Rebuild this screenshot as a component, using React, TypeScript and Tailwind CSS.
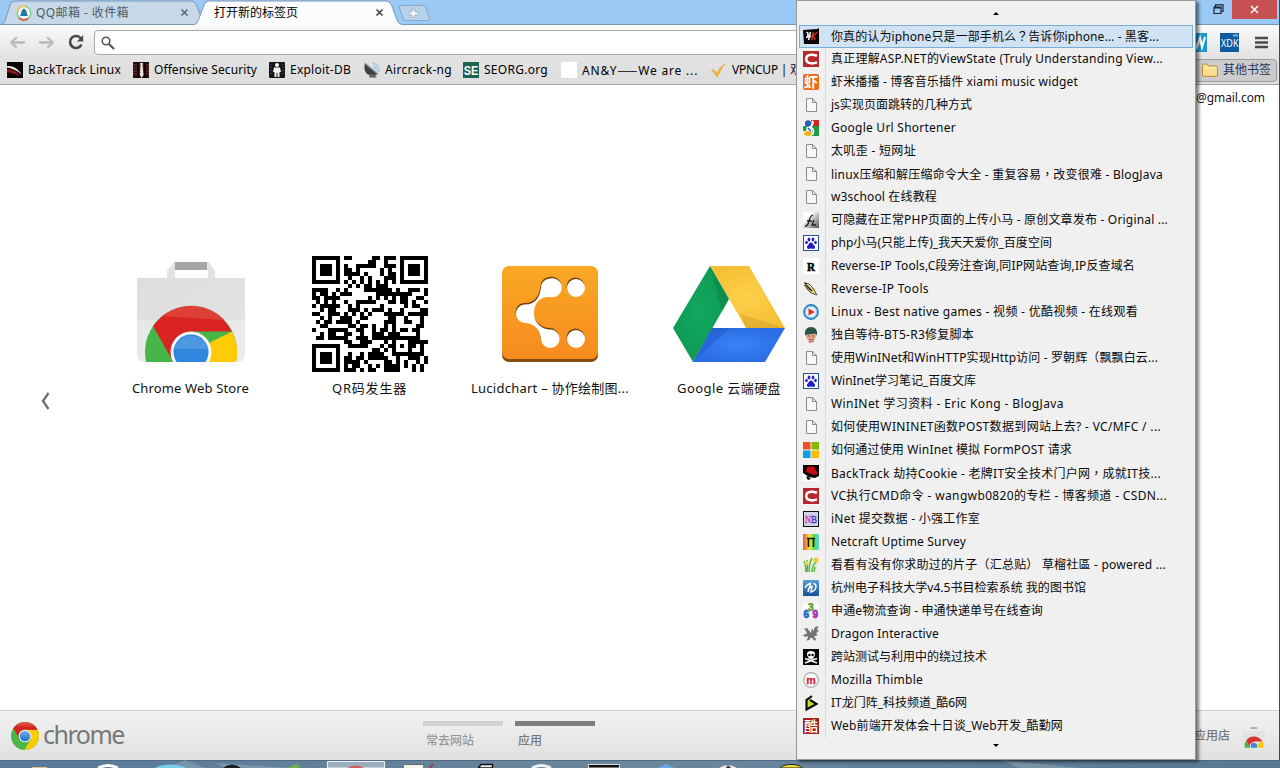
import { useLayoutEffect, useRef, useState } from "react";
import type { ReactNode } from "react";

/* Text run whose tracking is adjusted so that it fills a given width. */
function Fit({ w, className = "", children }: { w: number; className?: string; children: string }) {
  const ref = useRef<HTMLSpanElement>(null);
  const [ls, setLs] = useState(0);
  useLayoutEffect(() => {
    if (ref.current) {
      const natural = ref.current.getBoundingClientRect().width - ls * children.length;
      setLs((w - natural) / children.length);
    }
  }, [w, children]);
  return (
    <span ref={ref} className={"inline-block shrink-0 whitespace-pre " + className} style={{ letterSpacing: `${ls}px` }}>
      {children.split(/([？，]|——)/).map((part, i) =>
        i % 2 ? (
          <span key={i} className="font-['Noto_Sans_CJK_TC',sans-serif]">
            {part}
          </span>
        ) : (
          part
        ),
      )}
    </span>
  );
}

/* ---------- QR code, version 3, level L, mask 3 ---------- */
function makeQr(text: string): boolean[][] {
  const N = 29;
  const bits: number[] = [];
  const put = (v: number, n: number) => {
    for (let i = n - 1; i >= 0; i--) bits.push((v >> i) & 1);
  };
  put(4, 4);
  put(text.length, 8);
  for (const c of text) put(c.charCodeAt(0), 8);
  put(0, 4);
  while (bits.length % 8) bits.push(0);
  const data: number[] = [];
  for (let i = 0; i < bits.length; i += 8) data.push(parseInt(bits.slice(i, i + 8).join(""), 2));
  for (let p = 0; data.length < 55; p++) data.push(p % 2 ? 0x11 : 0xec);
  const mul = (a: number, b: number) => {
    let r = 0;
    for (; b; b >>= 1) {
      if (b & 1) r ^= a;
      a = a << 1;
      if (a & 256) a ^= 0x11d;
    }
    return r;
  };
  let gen = [1];
  let root = 1;
  for (let i = 0; i < 15; i++) {
    const next = [...gen, 0];
    gen.forEach((g, k) => (next[k + 1] ^= mul(g, root)));
    gen = next;
    root = mul(root, 2);
  }
  const rem = [...data, ...new Array(15).fill(0)];
  for (let i = 0; i < 55; i++) {
    const f = rem[i];
    gen.forEach((g, k) => (rem[i + k] ^= mul(g, f)));
  }
  const stream = [...data, ...rem.slice(55)];
  const m: (boolean | null)[][] = Array.from({ length: N }, () => new Array(N).fill(null));
  const finder = (r0: number, c0: number) => {
    for (let r = -1; r < 8; r++)
      for (let c = -1; c < 8; c++) {
        if (r0 + r < 0 || c0 + c < 0 || r0 + r >= N || c0 + c >= N) continue;
        const d = Math.max(Math.abs(r - 3), Math.abs(c - 3));
        m[r0 + r][c0 + c] = d !== 2 && d !== 4;
      }
  };
  finder(0, 0);
  finder(0, N - 7);
  finder(N - 7, 0);
  for (let r = -2; r <= 2; r++) for (let c = -2; c <= 2; c++) m[22 + r][22 + c] = Math.max(Math.abs(r), Math.abs(c)) !== 1;
  for (let i = 8; i < N - 8; i++) m[6][i] = m[i][6] = i % 2 === 0;
  const fmt = [..."111100010011101"].map((b) => b === "1");
  const cols = [0, 1, 2, 3, 4, 5, 7, 8];
  for (let i = 0; i < 8; i++) m[8][cols[i]] = fmt[i];
  const rows = [7, 5, 4, 3, 2, 1, 0];
  for (let i = 0; i < 7; i++) m[rows[i]][8] = fmt[8 + i];
  for (let i = 0; i < 7; i++) m[N - 1 - i][8] = fmt[i];
  for (let i = 0; i < 8; i++) m[8][N - 8 + i] = fmt[7 + i];
  m[N - 8][8] = true;
  let k = 0;
  let up = true;
  for (let c = N - 1; c > 0; c -= 2) {
    if (c === 6) c--;
    for (let i = 0; i < N; i++) {
      const r = up ? N - 1 - i : i;
      for (const cc of [c, c - 1]) {
        if (m[r][cc] !== null) continue;
        const bit = k < stream.length * 8 ? (stream[k >> 3] >> (7 - (k & 7))) & 1 : 0;
        k++;
        m[r][cc] = (bit === 1) !== ((r + cc) % 3 === 0);
      }
    }
    up = !up;
  }
  return m as boolean[][];
}

function QrIcon() {
  const d = makeQr("http://www.the-qrcode-generator.com")
    .flatMap((row, r) => row.map((on, c) => (on ? `M${c} ${r}h1v1h-1z` : "")))
    .join("");
  return (
    <svg width="116" height="116" viewBox="0 0 29 29" shapeRendering="crispEdges">
      <path d={d} />
    </svg>
  );
}

/* ---------- larger drawings ---------- */
function ChromeBall({ id }: { id: string }) {
  return (
    <g>
      <defs>
        <linearGradient id={id + "r"} x1="0" y1="0" x2="0" y2="1">
          <stop offset="0" stopColor="#e0604f" />
          <stop offset=".35" stopColor="#d8201d" />
        </linearGradient>
        <linearGradient id={id + "b"} x1="0" y1="0" x2="0" y2="1">
          <stop offset="0" stopColor="#7fb1ea" />
          <stop offset="1" stopColor="#1a6fd0" />
        </linearGradient>
      </defs>
      <circle cx="50" cy="50" r="50" fill="#4cb748" />
      <path d="M50 50L71 61L48 100A50 50 0 0 0 95 28L50 28z" fill="#fdcb06" />
      <path d="M8.500 22A50 50 0 0 1 95 28L50 28A22 22 0 0 0 30 60z" fill={`url(#${id}r)`} />
      <circle cx="50" cy="50" r="22.500" fill="#f4f4f2" />
      <circle cx="50" cy="50" r="19" fill={`url(#${id}b)`} />
    </g>
  );
}

function StoreIcon() {
  return (
    <svg width="108" height="101" viewBox="0 0 108 101">
      <defs>
        <linearGradient id="bag" x1="0" y1="0" x2="1" y2="1">
          <stop offset="0" stopColor="#dcdedf" />
          <stop offset="1" stopColor="#e4e4e4" />
        </linearGradient>
        <clipPath id="bagclip">
          <path d="M0 17H108V93Q108 101 100 101H8Q0 101 0 93z" />
        </clipPath>
      </defs>
      <path d="M30 17V10L37 1H72L78 10V17H71V9H38V17z" fill="#e1e2e3" />
      <rect x="38" y="1" width="32" height="8" fill="#a5a5a5" />
      <path d="M0 17H108V93Q108 101 100 101H8Q0 101 0 93z" fill="url(#bag)" />
      <path d="M0 59H108V93Q108 101 100 101H8Q0 101 0 93z" fill="#fff" opacity=".25" />
      <g clipPath="url(#bagclip)">
        <circle cx="54" cy="91" r="46" fill="#48b548" />
        <path d="M54 91L95 70.500A46 46 0 0 1 90 120L50 125z" fill="#fecb05" />
        <path d="M16 65A46 46 0 0 1 95 70.500H54L34 97z" fill="#da2422" />
        <path d="M25 55A46 46 0 0 1 88 59z" fill="#e2554b" opacity=".55" />
        <circle cx="54" cy="91" r="20.500" fill="#f8f8f8" />
        <circle cx="54" cy="91" r="17.500" fill="#2f86dd" />
        <path d="M37 88A17.500 17.500 0 0 1 71 88z" fill="#62a5e8" opacity=".6" />
      </g>
    </svg>
  );
}

function LucidIcon() {
  const shape = (
    <>
      <circle cx="74" cy="22" r="9" />
      <circle cx="74" cy="73" r="9" />
      <path d="M48 12.500A9.500 9.500 0 1 1 48 31C40 30 32 35 32 47S41 63 48 63.500A9.300 9.300 0 1 1 39 74C38.500 64 33 57.500 23 57A9.300 9.300 0 0 1 22 38.500C33 39 38 32 39 21A9.500 9.500 0 0 1 48 12.500z" />
    </>
  );
  return (
    <svg width="96" height="97" viewBox="0 0 96 97">
      <defs>
        <linearGradient id="luc" x1="0" y1="0" x2="0" y2="1">
          <stop offset="0" stopColor="#f9a825" />
          <stop offset="1" stopColor="#f78b1e" />
        </linearGradient>
      </defs>
      <rect y="3" width="96" height="93" rx="7" fill="#874a0f" />
      <rect width="96" height="93" rx="7" fill="url(#luc)" />
      <g fill="#74400d" transform="translate(-.5 -1.500)">{shape}</g>
      <g fill="#fff">{shape}</g>
    </svg>
  );
}

function DriveIcon() {
  return (
    <svg width="112" height="97" viewBox="0 0 112 97">
      <defs>
        <radialGradient id="dy">
          <stop offset="0" stopColor="#ffd04b" />
          <stop offset="1" stopColor="#f4c136" />
        </radialGradient>
        <radialGradient id="dg">
          <stop offset="0" stopColor="#11a860" />
          <stop offset="1" stopColor="#0e9a55" />
        </radialGradient>
        <radialGradient id="db">
          <stop offset="0" stopColor="#3d82fb" />
          <stop offset="1" stopColor="#2a6de4" />
        </radialGradient>
      </defs>
      <path d="M37 0H76L112 62H73z" fill="url(#dy)" />
      <path d="M37 0L56 33L20 96L0 62z" fill="url(#dg)" />
      <path d="M39 62H112L92 96H20z" fill="url(#db)" />
      <path d="M37 0L56 33L49 46z" fill="#06723e" opacity=".3" />
      <path d="M67 48L112 62H73z" fill="#b98a1d" opacity=".3" />
      <path d="M39 62H57L20 96z" fill="#1a4fb5" opacity=".35" />
    </svg>
  );
}

/* ---------- favicons ---------- */
function Ico({ children }: { children?: ReactNode }) {
  return (
    <svg width="16" height="16" viewBox="0 0 16 16" className="shrink-0">
      {children}
    </svg>
  );
}

const cjk = "'Noto Sans CJK SC', sans-serif";
const serif = "'Liberation Serif', serif";
const sans = "'Liberation Sans', sans-serif";

const icons: Record<string, ReactNode> = {
  page: <path d="M3.500 1.500H9.500L13.500 5.500V14.500H3.500zM9.500 1.500V5.500H13.500" fill="#f7f7f7" stroke="#8c8c8c" />,
  hk: (
    <>
      <path d="M0 2L14 1L16 0V16H1z" fill="#090606" />
      <path d="M3.500 5Q5 3.500 5 6.500T3 9.500M7.500 4L5.500 12M5 8.500H8" stroke="#fff" strokeWidth="1.500" fill="none" />
      <path d="M10.500 4L8.500 12M14 4Q12 7.500 9.500 8Q11.500 9 12 12" stroke="#d23226" strokeWidth="1.500" fill="none" />
    </>
  ),
  c: (
    <>
      <rect width="16" height="16" fill="#b5282d" />
      <path d="M14 4.800Q11 3.600 8.300 3.700Q3.200 4 3.200 8T8.300 12.300Q11 12.500 14 11.400" stroke="#fff" strokeWidth="2.600" fill="none" />
    </>
  ),
  xia: (
    <>
      <rect width="16" height="16" rx="2" fill="#ef6c16" />
      <text x="1" y="13" fontSize="14" fontWeight="700" fill="#fff" fontFamily={cjk}>虾</text>
    </>
  ),
  google: (
    <>
      <rect width="16" height="16" fill="#fff" />
      <path d="M8 0H16V6H9z" fill="#d9221f" />
      <path d="M9 6H16V16H9z" fill="#1b9a45" />
      <path d="M0 6H4L3 11H0z" fill="#1d9f48" />
      <circle cx="5" cy="3.500" r="3.200" fill="#2563b8" />
      <ellipse cx="5" cy="13.500" rx="4" ry="2.500" fill="#efb21b" />
      <path d="M9 1C12 3 7.500 6 8 7.500C11.500 9 10.500 12 9.500 15" stroke="#fff" strokeWidth="1.800" fill="none" />
      <path d="M5 8L8 11" stroke="#2563b8" strokeWidth="1.500" />
    </>
  ),
  fi: (
    <>
      <defs>
        <linearGradient id="fi" x1="0" y1="0" x2="1" y2="1">
          <stop offset=".3" stopColor="#fff" />
          <stop offset="1" stopColor="#555" />
        </linearGradient>
      </defs>
      <rect width="16" height="16" fill="url(#fi)" />
      <path d="M2 14Q5 14 6 9T10 3M4 9H9M11 8L9 13H13" stroke="#222" fill="none" strokeWidth="1.300" />
    </>
  ),
  baidu: (
    <>
      <rect x=".5" y=".5" width="15" height="15" fill="#fff" stroke="#24559b" />
      <g fill="#2422c6">
        <ellipse cx="6" cy="4.500" rx="1.400" ry="2" />
        <ellipse cx="10" cy="4.500" rx="1.400" ry="2" />
        <ellipse cx="3.500" cy="7.500" rx="1.300" ry="1.700" />
        <ellipse cx="12.500" cy="7.500" rx="1.300" ry="1.700" />
        <path d="M8 7.300Q6.500 7.800 5.500 9.500Q3.200 11.500 4 13Q5 14.500 8 13.600Q11 14.500 12 13Q12.800 11.500 10.500 9.500Q9.500 7.800 8 7.300z" />
      </g>
    </>
  ),
  r: (
    <>
      <rect width="16" height="16" fill="#fff" />
      <text x="4" y="12.500" fontSize="12" fontWeight="700" stroke="#000" strokeWidth=".5" fontFamily={serif} textLength="8" lengthAdjust="spacingAndGlyphs">R</text>
    </>
  ),
  pen: (
    <>
      <path d="M2 2L6 3L11 8L8 12L4 8z" fill="#f3e6a0" stroke="#222" strokeWidth=".8" />
      <path d="M1 4L8 12L14 14L10 7" stroke="#3a3a2c" fill="#ead266" strokeWidth=".8" />
      <path d="M1 1L4 2.500L2.500 4z" fill="#111" />
      <path d="M3 4L9 10" stroke="#222" strokeWidth="1.500" />
    </>
  ),
  play: (
    <>
      <circle cx="8" cy="8" r="7" fill="#fff" stroke="#2787c4" strokeWidth="1.800" />
      <circle cx="8" cy="8" r="5.500" fill="#e5f3fb" stroke="#8cc6e8" />
      <path d="M5.500 4.500L12 8L5.500 11.500z" fill="#e03423" />
    </>
  ),
  boy: (
    <>
      <path d="M5 9H11V15L6 16z" fill="#c97f66" />
      <ellipse cx="8" cy="8.500" rx="5" ry="5.500" fill="#dba184" />
      <path d="M2 8.500Q1 0 8 0T14 8.500L12 6.500L4 7.500z" fill="#2b5547" />
      <path d="M6 12.500H10" stroke="#9c4a40" strokeWidth=".8" />
      <path d="M5 9H6.500M9.500 9H11" stroke="#5a3a2c" strokeWidth=".8" />
    </>
  ),
  ms: (
    <>
      <path d="M0 0H7.500V7.500H0z" fill="#f04e23" />
      <path d="M8.500 0H16V7.500H8.500z" fill="#7fba00" />
      <path d="M0 8.500H7.500V16H0z" fill="#0a9fe8" />
      <path d="M8.500 8.500H16V16H8.500z" fill="#feb902" />
    </>
  ),
  hat: (
    <>
      <rect width="16" height="16" fill="#fff" />
      <path d="M0 0H16V11L12 13L6 12L0 8z" fill="#0b0202" />
      <path d="M3 6Q4 1 7 1.500Q12 0 13 6L15 8Q13 11 8 9T1 5z" fill="#c80b12" />
      <path d="M3 12L5 11L8 14L5 15z" fill="#111" />
    </>
  ),
  nb: (
    <>
      <rect x=".5" y=".5" width="15" height="15" fill="#d2d2e6" stroke="#111" />
      <text x="2" y="11.500" fontSize="9.500" fill="#d238a8" stroke="#d238a8" strokeWidth=".3" fontFamily={serif} textLength="6" lengthAdjust="spacingAndGlyphs">N</text>
      <text x="8" y="11.500" fontSize="9.500" fill="#3432c0" stroke="#3432c0" strokeWidth=".3" fontFamily={serif} textLength="6" lengthAdjust="spacingAndGlyphs">B</text>
    </>
  ),
  net: (
    <>
      <defs>
        <linearGradient id="net">
          <stop offset="0" stopColor="#ea4f78" />
          <stop offset=".22" stopColor="#f2a02c" />
          <stop offset=".42" stopColor="#e4ef33" />
          <stop offset=".68" stopColor="#54db4c" />
          <stop offset="1" stopColor="#5cd5e8" />
        </linearGradient>
      </defs>
      <rect width="16" height="16" fill="url(#net)" />
      <path d="M4 4.500H12M5.500 4V13M10.500 4V13" stroke="#10140a" strokeWidth="1.600" fill="none" />
    </>
  ),
  grass: (
    <>
      <path d="M0 2H15V15H0z" fill="#e4f2d2" />
      <path d="M3 15Q3 8 1 4M6 15Q6 7 9 1M9 15Q9 9 13 5M4 15Q5 9 4 3M11 15L12 10" stroke="#55ad49" strokeWidth="1.400" fill="none" />
      <circle cx="13" cy="3" r="2.500" fill="#f5c636" />
      <circle cx="3.500" cy="6" r="2" fill="#efd94f" />
    </>
  ),
  lib: (
    <>
      <defs>
        <linearGradient id="lib" x1="0" y1="0" x2="0" y2="1">
          <stop offset="0" stopColor="#5a9ed4" />
          <stop offset="1" stopColor="#154f9c" />
        </linearGradient>
      </defs>
      <rect width="16" height="16" rx="1" fill="url(#lib)" />
      <path d="M2 8Q4 4 7.500 3.500L5 12M5 10Q7 6.500 9 6.500L8 12Q12.500 11 13 6.500Q13 4 10.500 3.500" stroke="#fff" strokeWidth="1.500" fill="none" />
    </>
  ),
  num: (
    <>
      <rect width="16" height="16" fill="#fbfbfb" />
      <g fontFamily={sans} fontWeight="700" fontSize="10">
        <text x="5" y="8" fill="#5a9f17" stroke="#5a9f17" strokeWidth=".5">3</text>
        <text x=".5" y="15" fill="#2167c7" stroke="#2167c7" strokeWidth=".8">6</text>
        <text x="9.500" y="15" fill="#a536b7" stroke="#a536b7" strokeWidth=".8">9</text>
      </g>
    </>
  ),
  dragon: (
    <path
      d="M1 3L4 2L6 4.500L8 7L9 2L10.500 5L12 1L15.500 0L14 4L16 4.500L13 7.500L15 9L11 10.500L13 13L12 15L9 12L7 12L6.500 14L3 14.500L5 12L4.500 10L2 11L0 9L4 7.500L3 5z"
      fill="#747474"
    />
  ),
  skull: (
    <>
      <rect width="16" height="16" fill="#050505" />
      <path d="M2 9.500L14 14M14 9.500L2 14" stroke="#f5f5f5" strokeWidth="1.500" />
      <path d="M4 5Q4 2 8 2T12 5Q12 8 10.500 8.500V11H5.500V8.500Q4 8 4 5z" fill="#fff" />
      <circle cx="6.400" cy="6" r="1.200" />
      <circle cx="9.600" cy="6" r="1.200" />
      <path d="M7 9.500V11M9 9.500V11" stroke="#000" strokeWidth=".6" />
    </>
  ),
  moz: (
    <>
      <circle cx="8" cy="8" r="7.300" fill="#fff" stroke="#a9a9a9" strokeWidth="1.200" />
      <text x="3.300" y="11.700" fontSize="11" fontWeight="700" fill="#cf2136" stroke="#cf2136" strokeWidth=".3" fontFamily={sans} textLength="9.500" lengthAdjust="spacingAndGlyphs">m</text>
    </>
  ),
  ku6: <path d="M9 1L3.500 5V14.500L13.500 9L7 5" stroke="#080808" strokeWidth="2.100" fill="#c3de36" />,
  ku: (
    <>
      <rect width="16" height="16" fill="#a51d1d" />
      <text x="1" y="13" fontSize="14" fontWeight="500" fill="#fff" fontFamily={cjk}>酷</text>
    </>
  ),
  bt: (
    <>
      <rect width="16" height="16" fill="#0a0203" />
      <path d="M0 4Q9 3 15 13Q9 7 0 5.500z" fill="#f0e5e5" />
      <path d="M0 7Q8 7 13 14Q6 11 0 10z" fill="#8d1820" />
    </>
  ),
  off: (
    <>
      <rect width="16" height="16" fill="#2a0d0c" />
      <path d="M0 3H16M0 6H16M0 9H16M0 12H16" stroke="#7c3430" />
      <path d="M5 0V16M12 0V16" stroke="#0d0303" strokeWidth="2" />
      <path d="M7 1H10L9.500 3L10.500 13L8.500 16L7 13L7.500 3z" fill="#ece4e0" />
    </>
  ),
  exp: (
    <>
      <rect width="16" height="16" rx="1" fill="#171717" />
      <circle cx="8" cy="3" r="2" fill="#fff" />
      <path d="M5 5.500H11L12 10H10.500V15H8.500V11H7.500V15H5.500V10H4z" fill="#f2f2f2" />
      <path d="M2 2V14M14 2V14" stroke="#6b6b6b" strokeDasharray="1 2" />
    </>
  ),
  dish: (
    <>
      <path d="M8 1Q15 2 15 10M9 4Q12 5 13 9" stroke="#a9c3ea" strokeWidth="1.500" fill="none" />
      <path d="M1 1Q-1 9 4 12.500Q9 15 14 12z" fill="#3c4146" />
      <path d="M1 1L14 12" stroke="#9aa0a5" strokeWidth="1.500" />
      <path d="M6 12L5 15.500H13L10 12z" fill="#5b5f63" />
    </>
  ),
  se: (
    <>
      <rect width="16" height="16" fill="#1b6350" />
      <text x=".8" y="12.500" fontSize="12" fontWeight="700" fill="#fff" fontFamily={sans} textLength="14.500" lengthAdjust="spacingAndGlyphs">SE</text>
    </>
  ),
  blank: <rect width="16" height="16" fill="#fff" />,
  check: <path d="M0 8.500L2 7L6 10.500Q9 4 15 1Q10 7 7 15L5.500 15Q4 11 0 8.500z" fill="#e5b342" />,
};

/* ---------- data ---------- */
const menu: [string, string, number][] = [
  ["hk", "你真的认为iphone只是一部手机么？告诉你iphone... - 黑客...", 328],
  ["c", "真正理解ASP.NET的ViewState (Truly Understanding View...", 332],
  ["xia", "虾米播播 - 博客音乐插件 xiami music widget", 247],
  ["page", "js实现页面跳转的几种方式", 141],
  ["google", "Google Url Shortener", 125],
  ["page", "太叽歪 - 短网址", 85],
  ["page", "linux压缩和解压缩命令大全 - 重复容易，改变很难 - BlogJava", 332],
  ["page", "w3school 在线教程", 106],
  ["fi", "可隐藏在正常PHP页面的上传小马 - 原创文章发布 - Original ...", 337],
  ["baidu", "php小马(只能上传)_我天天爱你_百度空间", 221],
  ["r", "Reverse-IP Tools,C段旁注查询,同IP网站查询,IP反查域名", 304],
  ["pen", "Reverse-IP Tools", 98],
  ["play", "Linux - Best native games - 视频 - 优酷视频 - 在线观看", 307],
  ["boy", "独自等待-BT5-R3修复脚本", 143],
  ["page", "使用WinINet和WinHTTP实现Http访问 - 罗朝辉（飘飘白云...", 327],
  ["baidu", "WinInet学习笔记_百度文库", 145],
  ["page", "WinINet 学习资料 - Eric Kong - BlogJava", 233],
  ["page", "如何使用WININET函数POST数据到网站上去? - VC/MFC / ...", 330],
  ["ms", "如何通过使用 WinInet 模拟 FormPOST 请求", 241],
  ["hat", "BackTrack 劫持Cookie - 老牌IT安全技术门户网，成就IT技...", 330],
  ["c", "VC执行CMD命令 - wangwb0820的专栏 - 博客频道 - CSDN...", 336],
  ["nb", "iNet 提交数据 - 小强工作室", 149],
  ["net", "Netcraft Uptime Survey", 135],
  ["grass", "看看有没有你求助过的片子（汇总贴） 草榴社區 - powered ...", 335],
  ["lib", "杭州电子科技大学v4.5书目检索系统 我的图书馆", 255],
  ["num", "申通e物流查询 - 申通快递单号在线查询", 212],
  ["dragon", "Dragon Interactive", 108],
  ["skull", "跨站测试与利用中的绕过技术", 156],
  ["moz", "Mozilla Thimble", 92],
  ["ku6", "IT龙门阵_科技频道_酷6网", 136],
  ["ku", "Web前端开发体会十日谈_Web开发_酷勤网", 232],
];

const bookmarks: [string, string, number, string][] = [
  ["bt", "BackTrack Linux", 93, "w-[126px]"],
  ["off", "Offensive Security", 103, "w-[136px]"],
  ["exp", "Exploit-DB", 61, "w-[95px]"],
  ["dish", "Aircrack-ng", 67, "w-[99px]"],
  ["se", "SEORG.org", 64, "w-[98px]"],
  ["blank", "AN&Y——We are ...", 117, "w-[150px]"],
  ["check", "VPNCUP | 欢", 70, "w-[120px]"],
];

/* ---------- sections ---------- */
function TabStrip() {
  return (
    <div className="relative h-[25px] shrink-0 bg-[#99c9f4]">
      <svg width="1280" height="25" className="absolute left-0 top-0">
        <path d="M1 24.500Q4 24 5 21L10 5Q11.500 1 15 1H191Q195 1 196.500 5L202 20Q203 24 206 24.500z" fill="#c7d9e9" stroke="#7f98b0" />
        <path d="M399 7Q399 5.500 401 5.500H423Q425 5.500 426 7.500L429.500 18Q430 20.500 427 20.500H406Q404 20.500 403 18z" fill="#b7d2ea" stroke="#86a5c3" />
        <path d="M412 9.500h3v2.500h3v3h-3v2.500h-3v-2.500h-3v-3h3z" fill="#f4f8fb" stroke="#94abc0" strokeWidth=".7" />
        <path d="M194 25Q197 24 198.500 20L204 5Q205.500 1 209 1H386Q390 1 391.500 5L397 20Q398.500 24.500 403 25z" fill="#fbfcfd" />
        <path d="M0 24.500H194Q197 24 198.500 20L204 5Q205.500 1 209 1H386Q390 1 391.500 5L397 20Q398.500 24.500 403 24.500H1280" fill="none" stroke="#7f98b0" />
      </svg>
      <div className="relative flex h-[25px] items-center">
        <svg width="16" height="16" viewBox="0 0 16 16" className="ml-4">
          <circle cx="8" cy="8" r="6.800" fill="#f5f9f8" stroke="#7fc98c" strokeWidth="1.500" />
          <path d="M1.500 6A7 7 0 0 1 9 1" stroke="#eecb61" strokeWidth="2" fill="none" />
          <path d="M3 13A7 7 0 0 0 12 13.500" stroke="#df5c50" strokeWidth="2" fill="none" />
          <path d="M8 3.500Q11 5 11 9L12 11H4L5 9Q5 5 8 3.500z" fill="#2676a6" />
        </svg>
        <Fit w={93} className="ml-1 text-[12px] text-[#4f5a66]">QQ邮箱 - 收件箱</Fit>
        <svg width="9" height="9" className="ml-[51px]">
          <path d="M1.500 1.500L7.500 7.500M7.500 1.500L1.500 7.500" stroke="#5b6570" strokeWidth="1.500" />
        </svg>
        <Fit w={84} className="ml-[25px] text-[12px] text-black">打开新的标签页</Fit>
        <svg width="9" height="9" className="ml-[77px]">
          <path d="M1.500 1.500L7.500 7.500M7.500 1.500L1.500 7.500" stroke="#444" strokeWidth="1.600" />
        </svg>
        <svg width="11" height="11" className="mb-[7px] ml-auto">
          <path d="M2.500 2.500V.8H10V7.500H8.500M1 3H8V9.500H1zM1 3.800H8" fill="none" stroke="#1c2430" strokeWidth="1.200" />
        </svg>
        <div className="mb-[6px] ml-[8px] mr-[3px] flex h-[19px] w-[45px] items-center justify-center bg-[#c65252]">
          <svg width="9" height="9">
            <path d="M1 1L8 8M8 1L1 8" stroke="#fff" strokeWidth="1.500" />
          </svg>
        </div>
      </div>
    </div>
  );
}

function Toolbar() {
  return (
    <div className="flex h-[31px] shrink-0 items-center bg-linear-to-b from-[#fafafa] to-[#e4e4e4]">
      <svg width="94" height="31" className="shrink-0">
        <g fill="none" strokeLinecap="round" strokeLinejoin="round" strokeWidth="2.300" stroke="#b9b9b9">
          <path d="M24 17.500H11.500M16 13L11 17.500L16 22" />
          <path d="M40 17.500H52.500M48 13L53 17.500L48 22" />
        </g>
        <path d="M81 13.500A6 6 0 1 0 81.500 19.500" fill="none" stroke="#484848" strokeWidth="2.600" />
        <path d="M77 16.500H83.200V10z" fill="#484848" />
      </svg>
      <div className="mt-1 flex h-[25px] w-[1090px] shrink-0 items-center rounded-sm border border-[#a9a9a9] bg-white">
        <svg width="20" height="16" className="ml-1">
          <circle cx="7" cy="6" r="3.800" fill="none" stroke="#555" strokeWidth="1.600" />
          <path d="M10 9L15 14" stroke="#555" strokeWidth="2.200" />
        </svg>
      </div>
      <div className="mt-[3px] flex flex-1 items-center justify-end pr-[12px]">
        <svg width="19" height="19">
          <rect width="19" height="19" fill="#1d97d2" />
          <path d="M5 4L9 14L12 5L14 14L17 4" stroke="#fff" strokeWidth="2.200" fill="none" />
        </svg>
        <svg width="19" height="19" className="ml-[13px]">
          <rect width="19" height="19" fill="#0c5c9f" />
          <ellipse cx="15.500" cy="2.500" rx="3" ry="1.200" fill="#6bacd8" />
          <text x="1" y="14" fontSize="10" fill="#fff" fontFamily="'Noto Sans', sans-serif" textLength="17.500" lengthAdjust="spacingAndGlyphs">XDK</text>
        </svg>
        <svg width="13" height="13" className="ml-[16px]">
          <path d="M0 2H13M0 6.500H13M0 11H13" stroke="#4a4a4a" strokeWidth="2.600" />
        </svg>
      </div>
    </div>
  );
}

function BookmarkBar() {
  return (
    <div className="flex h-[29px] shrink-0 items-center border-b border-[#a6a6a6] bg-linear-to-b from-[#e3e3e3] to-[#dddddd] pl-[7px] text-[12px]">
      {bookmarks.map(([icon, label, w, cell]) => (
        <div key={label} className={"flex shrink-0 items-center gap-[5px] overflow-hidden " + cell}>
          <Ico>{icons[icon]}</Ico>
          <Fit w={w}>{label}</Fit>
        </div>
      ))}
      <div className="ml-auto mr-[3px] flex h-[23px] w-[84px] items-center rounded-sm border border-[#9b9b9b] bg-[#cbcbcb] pl-[8px]">
        <svg width="16" height="14" className="mr-[5px]">
          <path d="M.5 2.500Q.5 1 2 1H5L7 3H14Q15.500 3 15.500 4.500V12Q15.500 13.300 14 13.300H2Q.5 13.300 .5 12z" fill="#f9dc8e" stroke="#ba8a32" />
          <path d="M1.500 5H14.500" stroke="#fff3c5" />
        </svg>
        <span className="whitespace-nowrap text-[#1d355f]">其他书签</span>
      </div>
    </div>
  );
}

function Apps() {
  return (
    <div className="flex h-[625px] shrink-0 bg-white">
      <svg width="9" height="18" className="ml-[41px] mt-[307px] shrink-0">
        <path d="M7.500 1L2 9L7.500 17" stroke="#707070" strokeWidth="2.300" fill="none" />
      </svg>
      <div className="ml-[50px] mt-[170px] flex text-[13px] text-[#111]">
        {[
          { icon: <StoreIcon />, t: "Chrome Web Store", w: 117, pb: "pb-[11px]", cell: "w-[181px]" },
          { icon: <QrIcon />, t: "QR码发生器", w: 75, pb: "pb-[1px]", cell: "w-[177px]" },
          { icon: <LucidIcon />, t: "Lucidchart – 协作绘制图...", w: 158, pb: "pb-[10px]", cell: "w-[184px]" },
          { icon: <DriveIcon />, t: "Google 云端硬盘", w: 104, pb: "pb-[10px]", cell: "w-[174px]" },
        ].map((a) => (
          <div key={a.t} className={"flex shrink-0 flex-col items-center " + a.cell}>
            <div className={"flex h-[118px] items-end " + a.pb}>{a.icon}</div>
            <Fit w={a.w} className="mt-[5px] leading-5">{a.t}</Fit>
          </div>
        ))}
      </div>
      <span className="ml-auto mr-[15px] mt-[3px] shrink-0 text-[12px] leading-5 text-[#221122]">
        <Fit w={69}>@gmail.com</Fit>
      </span>
    </div>
  );
}

function Footer() {
  return (
    <div className="flex h-[50px] shrink-0 items-center border-t border-[#cfcfcf] bg-linear-to-b from-[#f2f2f2] to-[#e1e1e1]">
      <svg width="28" height="28" viewBox="0 0 100 100" className="ml-[11px]">
        <ChromeBall id="fb" />
      </svg>
      <Fit w={81} className="ml-[4px] -mt-1 text-[25px] leading-8 text-[#777]">chrome</Fit>
      <div className="ml-[299px] flex gap-3 self-start pt-[10px] text-[12px]">
        <div className="w-[80px] border-t-[5px] border-[#d2d2d2] pl-[3px] pt-[7px] font-medium text-[#999]">常去网站</div>
        <div className="w-[80px] border-t-[5px] border-[#7d7d7d] pl-[3px] pt-[7px] font-medium text-[#777]">应用</div>
      </div>
      <span className="ml-auto text-[12px] font-medium text-[#777]">应用店</span>
      <svg width="22" height="21" viewBox="0 0 108 101" className="ml-[13px] mr-[15px] mt-[3px]">
        <path d="M0 17H108V101H0z" fill="#e3e3e3" />
        <rect x="36" y="0" width="34" height="8" fill="#a2a2a2" />
        <path d="M8 101A46 46 0 0 1 16 65L34 101z" fill="#48b548" />
        <path d="M54 91L96 70.500A46 46 0 0 1 99 101H60z" fill="#fecb05" />
        <path d="M16 65A46 46 0 0 1 95 70.500H54L34 101z" fill="#d8352f" />
        <path d="M34 101A21 21 0 1 1 74 101z" fill="#f8f8f8" />
        <path d="M39 101A17 17 0 1 1 69 101z" fill="#3c86d4" />
      </svg>
    </div>
  );
}

function Taskbar() {
  return (
    <div className="h-2 shrink-0 bg-linear-to-r from-[#58799a] via-[#6b879d] to-[#557894]">
      <svg width="1280" height="8">
        <path d="M0 .5H1280" stroke="#4f6a82" />
        <path d="M185 0L165 8H205zM215 3L290 8H225zM1000 0L1080 8H1020z" fill="#8da4b3" opacity=".6" />
        <rect x="32" y="7" width="15" height="1" fill="#d9c38b" />
        <path d="M98 8Q108 3 118 8" stroke="#fff" strokeWidth="3" fill="none" />
        <path d="M155 8Q158 5 170 4.500Q183 5 186 8z" fill="#78cdea" />
        <path d="M223 8Q232 1 241 8z" fill="#1c1c26" />
        <path d="M286 8Q292 7 296 4L301 6L298 8z" fill="#6bb542" />
        <path d="M327.500 8V1.500H384.500V8z" fill="#9caebd" stroke="#eef3f6" />
        <path d="M347 8Q356 3 364 8z" fill="#d2605a" />
        <path d="M404 8V5H423V8z" fill="#f2f2ee" />
        <path d="M404 4.500H423" stroke="#555" strokeDasharray="1 1" />
        <path d="M430 8L433 4" stroke="#a63a3a" strokeWidth="2" />
        <path d="M478.500 8L481 4.500H492.500V8z" fill="#eee" stroke="#111" strokeWidth="1.500" />
        <path d="M532 8Q541 3 551 8" stroke="#eee" strokeWidth="3" fill="none" />
        <path d="M588.500 8V4.500H619.500V8z" fill="#111" stroke="#ddd" />
        <path d="M657 8L666 4L675 8z" fill="#66a8df" />
        <path d="M719 8Q728 2 737 8z" fill="#e4e4e4" />
        <path d="M726 8L728 5L731 8z" fill="#333" />
        <path d="M780 8Q783 4.500 791 4.500Q800 4.500 802 8z" fill="#ecdf2e" stroke="#222" />
      </svg>
    </div>
  );
}

function OverflowMenu() {
  return (
    <div className="absolute left-[796px] top-0 flex h-[760px] w-[400px] flex-col border border-[#979797] bg-[#f0f0f0] px-[2px] text-[12px] text-[#0a0a0a] shadow-[3px_2px_3px_rgba(0,0,0,0.5)]">
      <div className="flex h-[24px] shrink-0 items-center justify-center">
        <svg width="6" height="3">
          <path d="M0 3L3 0L6 3z" />
        </svg>
      </div>
      <div className="relative shrink-0">
        <div className="absolute bottom-0 left-[26px] top-0 w-px bg-[#dadada]" />
        {menu.map(([icon, label, w], i) => (
          <div
            key={i}
            className={
              "relative flex h-[23px] items-center gap-3 border pb-px pl-[3px] " +
              (i === 0 ? "border-[#78aed8] bg-[#d1e2f2]" : "border-transparent")
            }
          >
            <Ico>{icons[icon]}</Ico>
            <Fit w={w}>{label}</Fit>
          </div>
        ))}
      </div>
      <div className="flex h-[15px] shrink-0 items-center justify-center">
        <svg width="6" height="3">
          <path d="M0 0L3 3L6 0z" />
        </svg>
      </div>
    </div>
  );
}

export default function App() {
  return (
    <div className="relative flex h-[768px] w-[1280px] flex-col overflow-hidden bg-white font-['Noto_Sans','Noto_Sans_CJK_SC',sans-serif] leading-4">
      <TabStrip />
      <Toolbar />
      <BookmarkBar />
      <Apps />
      <Footer />
      <Taskbar />
      <OverflowMenu />
      <div className="absolute right-0 top-0 h-[760px] w-px bg-[#3d4a55]" />
    </div>
  );
}
